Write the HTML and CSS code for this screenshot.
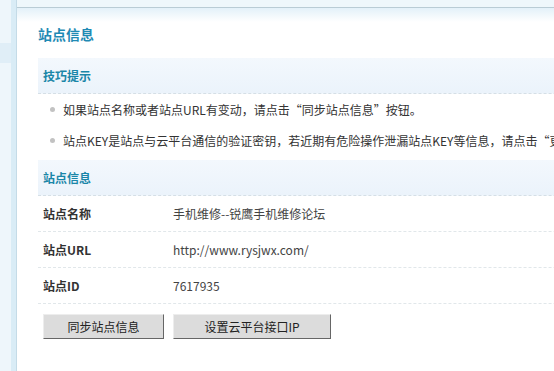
FILE: index.html
```html
<!DOCTYPE html>
<html lang="zh-CN">
<head>
    <meta charset="UTF-8">
    <title>站点信息</title>
    <link rel="stylesheet" href="styles.css">
</head>
<body>
    <div class="side">
        <div class="side-item"></div>
    </div>
    <div class="main">
        <div class="topbar"></div>
        <div class="content">
            <h2 class="title">站点信息</h2>

            <!-- tips -->
            <div class="bar">技巧提示</div>
            <ul class="tips">
                <li>如果站点名称或者站点URL有变动，请点击“同步站点信息”按钮。</li>
                <li>站点KEY是站点与云平台通信的验证密钥，若近期有危险操作泄漏站点KEY等信息，请点击“更换站点KEY”按钮。</li>
            </ul>

            <!-- site info -->
            <div class="bar">站点信息</div>
            <div class="row">
                <span class="label">站点名称</span>
                <span class="value">手机维修--锐鹰手机维修论坛</span>
            </div>
            <div class="row">
                <span class="label">站点URL</span>
                <span class="value">http://www.rysjwx.com/</span>
            </div>
            <div class="row">
                <span class="label">站点ID</span>
                <span class="value">7617935</span>
            </div>

            <div class="actions">
                <button class="btn btn-sync">同步站点信息</button>
                <button class="btn btn-ip">设置云平台接口IP</button>
            </div>
        </div>
    </div>
</body>
</html>
```

FILE: styles.css
```css
html, body {
    height: 100%;
}
body {
    margin: 0;
    display: flex;
    overflow: hidden;
    background: #fff;
    font-family: "Noto Sans CJK SC", "Noto Sans", sans-serif;
    font-size: 12px;
    color: #333;
}
.side {
    width: 11px;
    flex: none;
    background: #eef6fb;
    border-right: 5px solid #d9ecf6;
    padding-top: 43px;
}
.side-item {
    height: 20px;
    background: #e0eef7;
}
.main {
    flex: none;
    width: 900px;
    border-left: 1px solid #c4dbe7;
    display: flex;
    flex-direction: column;
}
.topbar {
    height: 7px;
    background: #eef7fb;
    border-bottom: 1px solid #b9ccd5;
}
.content {
    flex: 1;
    padding: 0 0 0 21px;
    background: linear-gradient(#e3f1f9, #fff 14px);
}
.title {
    margin: 0 0 14px;
    padding-top: 16px;
    line-height: 20px;
    font-size: 14px;
    font-weight: bold;
    color: #1f8ab4;
}
.bar {
    height: 35px;
    line-height: 35px;
    padding-left: 5px;
    background: linear-gradient(#f3f8fd, #ebf3fb);
    border-bottom: 1px dashed #d5dfe6;
    font-weight: bold;
    color: #1a86a8;
}
.tips {
    margin: 0;
    padding: 0 0 4px 12px;
    list-style: none;
}
.tips li {
    position: relative;
    height: 31px;
    line-height: 31px;
    padding-left: 13px;
    white-space: nowrap;
}
.tips li::before {
    content: "";
    position: absolute;
    left: 0;
    top: 13px;
    width: 5px;
    height: 5px;
    border-radius: 50%;
    background: #c2c2c2;
}
.row {
    display: flex;
    height: 35px;
    line-height: 35px;
    border-bottom: 1px dashed #e1e7ea;
    padding-left: 5px;
}
.label {
    width: 130px;
    font-weight: bold;
    color: #333;
}
.value {
    color: #444;
}
.actions {
    display: flex;
    gap: 9px;
    padding: 10px 0 0 5px;
}
.btn {
    height: 25px;
    padding: 0;
    font-family: inherit;
    font-size: 12px;
    color: #222;
    background: #dcdcdc;
    border: 1px solid;
    border-color: #ededed #666 #666 #ededed;
}
.btn-sync {
    width: 121px;
}
.btn-ip {
    width: 158px;
}
```
